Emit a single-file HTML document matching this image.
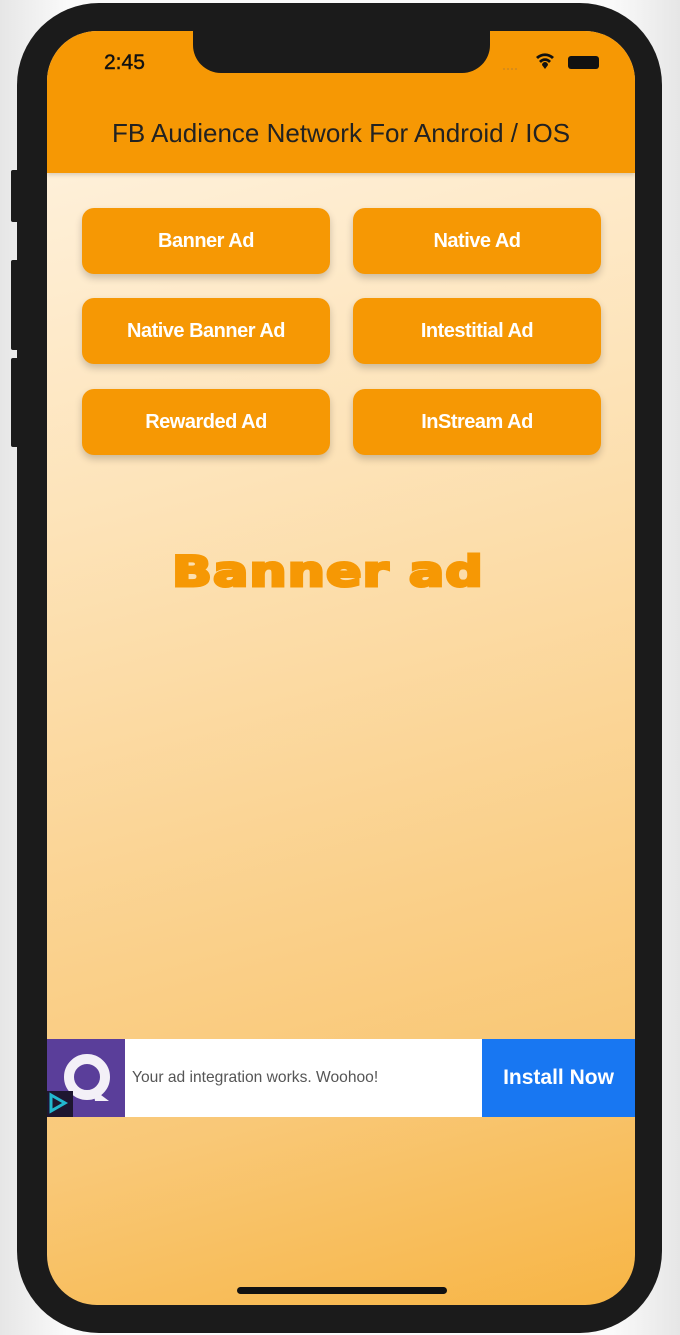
<!DOCTYPE html><html><head><style>
body{margin:0;width:680px;height:1335px;background:linear-gradient(90deg,#e6e6e6,#fafafa 10%,#fafafa 90%,#e6e6e6);position:relative;overflow:hidden;font-family:"Liberation Sans",sans-serif}
.sb{position:absolute;left:11px;width:8px;background:#1b1b1b;border-radius:2px}
.phone{position:absolute;left:17px;top:3px;width:645px;height:1330px;background:#1b1b1b;border-radius:82px}
.screen{position:absolute;left:47px;top:31px;width:588px;height:1274px;border-radius:50px;overflow:hidden;background:linear-gradient(165deg,#fff5e6 0%,#fde3b8 35%,#f9c877 80%,#f7b545 100%)}
.hdr{position:absolute;left:0;top:0;width:588px;height:142px;background:#f69804;box-shadow:0 2px 4px rgba(0,0,0,.15)}
.notch{position:absolute;left:146px;top:0;width:297px;height:42px;background:#1b1b1b;border-radius:0 0 28px 28px}
.time{position:absolute;left:57px;top:20px;font-size:21px;color:#111;-webkit-text-stroke:.4px #111}
.title{position:absolute;left:0;width:588px;top:87px;text-align:center;font-size:26px;color:#222}
.btn{position:absolute;width:248px;height:66px;background:#f69804;border-radius:12px;box-shadow:0 4px 8px rgba(0,0,0,.2);color:#fff;font-weight:bold;font-size:20px;letter-spacing:-0.5px;text-align:center;line-height:66px}
.big{position:absolute;left:-13px;width:588px;top:516px;text-align:center;font-family:"DejaVu Sans",sans-serif;font-weight:bold;font-size:42px;letter-spacing:1px;color:#f69804;-webkit-text-stroke:3px #f69804;transform:scaleX(1.24)}
.ad{position:absolute;left:0;top:1008px;width:588px;height:78px;background:#fff}
</style></head><body>
<div class="sb" style="top:170px;height:52px"></div>
<div class="sb" style="top:260px;height:90px"></div>
<div class="sb" style="top:358px;height:89px"></div>
<div class="phone"></div>
<div class="screen">
<div class="hdr"></div>
<div class="notch"></div>
<div class="time">2:45</div>
<svg style="position:absolute;left:452px;top:22px" width="80" height="20"><g fill="#d08a20"><circle cx="5" cy="16" r="1"/><circle cx="9" cy="16" r="1"/><circle cx="13" cy="16" r="1"/><circle cx="17" cy="16" r="1"/></g><path d="M37 4a13 13 0 0 1 18 0l-2 2a10 10 0 0 0-14 0zM40 8a8 8 0 0 1 12 0l-2 2a5 5 0 0 0-8 0zM43 12a3 3 0 0 1 6 0l-3 4z" fill="#111"/></svg>
<div style="position:absolute;left:521px;top:25px;width:31px;height:13px;background:#111;border-radius:3px"></div>
<div class="title">FB Audience Network For Android / IOS</div>
<div class="btn" style="left:35px;top:177px">Banner Ad</div>
<div class="btn" style="left:306px;top:177px">Native Ad</div>
<div class="btn" style="left:35px;top:267px">Native Banner Ad</div>
<div class="btn" style="left:306px;top:267px">Intestitial Ad</div>
<div class="btn" style="left:35px;top:358px">Rewarded Ad</div>
<div class="btn" style="left:306px;top:358px">InStream Ad</div>
<div class="big">Banner ad</div>
<div class="ad">
<div style="position:absolute;left:0;top:0;width:78px;height:78px;background:#5a3e9a"></div>
<svg style="position:absolute;left:0;top:0" width="78" height="78"><circle cx="40" cy="38" r="18" fill="none" stroke="#f3f0f7" stroke-width="10"/><path d="M46 50l16 12h-14z" fill="#f3f0f7"/><rect x="0" y="52" width="26" height="26" fill="#1e1630"/><path d="M4 56l14 8-14 8z" fill="none" stroke="#22b8d0" stroke-width="3"/></svg>
<div style="position:absolute;left:85px;top:30px;font-size:15.6px;color:#555">Your ad integration works. Woohoo!</div>
<div style="position:absolute;left:435px;top:0;width:153px;height:78px;background:#1877f2;color:#fff;font-weight:bold;font-size:21px;text-align:center;line-height:78px">Install Now</div>
</div>
<div style="position:absolute;left:190px;top:1256px;width:210px;height:7px;background:#111;border-radius:4px"></div>
</div>
</body></html>
